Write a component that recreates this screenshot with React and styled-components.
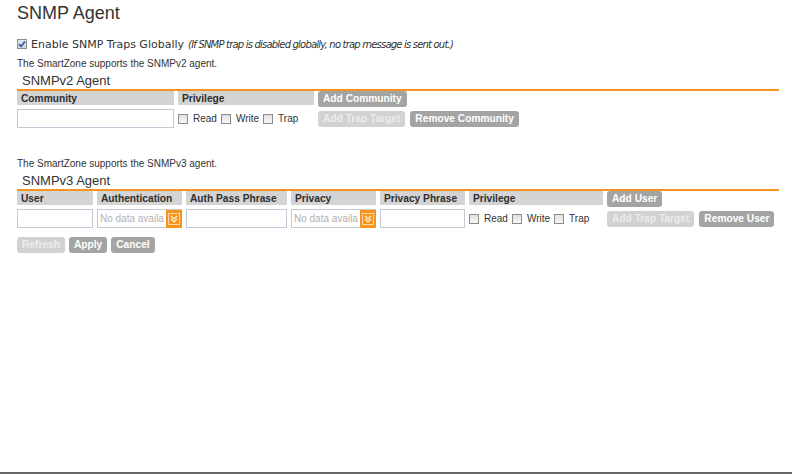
import React from "react";
import styled, { createGlobalStyle } from "styled-components";

const GlobalStyle = createGlobalStyle`
  html, body {
    margin: 0;
    padding: 0;
    background: #fff;
  }
  body {
    font-family: "Liberation Sans", Arial, sans-serif;
    color: #333;
  }
`;

const Page = styled.div`
  box-sizing: border-box;
  height: 474px;
  padding: 2px 13px 0 17px;
  border-bottom: 2px solid #666;
`;

const Title = styled.h1`
  margin: 0;
  font-size: 18px;
  line-height: 22px;
  font-weight: normal;
  color: #333;
`;

const TrapRow = styled.div`
  display: flex;
  align-items: center;
  gap: 4px;
  margin-top: 14px;
  height: 12px;
  font-family: "DejaVu Sans", sans-serif;
  font-size: 11px;
  color: #333;
  white-space: nowrap;
`;

const Note = styled.i`
  margin-left: 4px;
  font-size: 10px;
  letter-spacing: -0.8px;
`;

const Info = styled.div`
  margin-top: ${(p) => p.$top || 8}px;
  font-size: 10px;
  line-height: 12px;
  color: #333;
`;

const SectionTitle = styled.div`
  margin-top: 3px;
  padding-left: 5px;
  font-size: 13px;
  line-height: 16px;
  color: #333;
  border-bottom: 2px solid #f7941d;
`;

const Grid = styled.div`
  display: grid;
  grid-template-columns: ${(p) => p.$cols} auto;
  grid-template-rows: 16px 19px;
  column-gap: 4px;
  row-gap: 2px;
  align-items: center;
`;

const Head = styled.div`
  align-self: start;
  height: 14px;
  padding: 0 4px;
  background: #d4d4d4;
  font-weight: bold;
  font-size: 10.2px;
  line-height: 15px;
  color: #2e2e2e;
  white-space: nowrap;
  overflow: hidden;
`;

const Actions = styled.div`
  display: flex;
  gap: 5px;
  align-self: ${(p) => (p.$top ? "start" : "center")};
`;

const Button = styled.button`
  height: 16px;
  padding: 0 5px;
  border: 0;
  border-radius: 3px;
  background: ${(p) => (p.disabled ? "#d2d2d2" : "#a4a4a4")};
  color: ${(p) => (p.disabled ? "#ececec" : "#fff")};
  font-family: "Liberation Sans", Arial, sans-serif;
  font-weight: bold;
  font-size: 10.2px;
  line-height: 16px;
  white-space: nowrap;
`;

const TextInput = styled.div`
  box-sizing: border-box;
  height: 19px;
  border: 1px solid #c6c6d6;
  background: #fff;
`;

const SelectBox = styled.div`
  box-sizing: border-box;
  display: flex;
  height: 19px;
  border: 1px solid #c6c6d6;
  border-right: 0;
  background: #fff;
`;

const SelectText = styled.span`
  flex: 1;
  overflow: hidden;
  white-space: nowrap;
  padding-left: 2px;
  font-size: 10px;
  line-height: 17px;
  color: #b0b0b0;
`;

const Checks = styled.div`
  display: flex;
  align-items: center;
  font-size: 10px;
  color: #333;
`;

const Box = styled.span`
  box-sizing: border-box;
  display: inline-flex;
  align-items: center;
  justify-content: center;
  width: 10px;
  height: 10px;
  margin-right: ${(p) => p.$gap ?? 5}px;
  border: 1px solid #8c8c8c;
  background: ${(p) =>
    p.$checked
      ? "linear-gradient(#dfe6ef, #c9d4e2)"
      : "linear-gradient(#e2e2e2, #f6f6f6)"};
`;

const CheckLabel = styled.span`
  margin-right: 4px;
`;

const Footer = styled.div`
  display: flex;
  gap: 4px;
  margin-top: 9px;
`;

const Checkbox = ({ checked, gap }) => (
  <Box $checked={checked} $gap={gap}>
    {checked && (
      <svg width="8" height="8" viewBox="0 0 8 8">
        <path d="M1 4.2 L3.1 6.3 L7 1.6" stroke="#2b4f9c" strokeWidth="1.6" fill="none" />
      </svg>
    )}
  </Box>
);

const Privileges = () => (
  <Checks>
    <Checkbox />
    <CheckLabel>Read</CheckLabel>
    <Checkbox />
    <CheckLabel>Write</CheckLabel>
    <Checkbox />
    <CheckLabel>Trap</CheckLabel>
  </Checks>
);

const Select = () => (
  <SelectBox>
    <SelectText>No data availa</SelectText>
    <svg width="16" height="18" viewBox="0 0 16 18">
      <rect x="0" y="-1" width="16" height="19" fill="#f7941d" />
      <rect x="2.5" y="3.5" width="11" height="11" fill="none" stroke="#fcd6a4" />
      <path d="M5 6 L8 9 L11 6 M5 9 L8 12 L11 9" stroke="#fff4e4" strokeWidth="1.2" fill="none" />
    </svg>
  </SelectBox>
);

export default function App() {
  return (
    <>
      <GlobalStyle />
      <Page>
        <Title>SNMP Agent</Title>
        <TrapRow>
          <Checkbox checked gap={0} />
          <span>
            Enable SNMP Traps Globally
            <Note>(If SNMP trap is disabled globally, no trap message is sent out.)</Note>
          </span>
        </TrapRow>

        <Info>The SmartZone supports the SNMPv2 agent.</Info>
        <SectionTitle>SNMPv2 Agent</SectionTitle>
        <Grid $cols="157px 136px">
          <Head>Community</Head>
          <Head>Privilege</Head>
          <Actions $top>
            <Button>Add Community</Button>
          </Actions>
          <TextInput />
          <Privileges />
          <Actions>
            <Button disabled>Add Trap Target</Button>
            <Button>Remove Community</Button>
          </Actions>
        </Grid>

        <Info $top={30}>The SmartZone supports the SNMPv3 agent.</Info>
        <SectionTitle>SNMPv3 Agent</SectionTitle>
        <Grid $cols="76px 85px 101px 85px 85px 134px">
          <Head>User</Head>
          <Head>Authentication</Head>
          <Head>Auth Pass Phrase</Head>
          <Head>Privacy</Head>
          <Head>Privacy Phrase</Head>
          <Head>Privilege</Head>
          <Actions $top>
            <Button>Add User</Button>
          </Actions>
          <TextInput />
          <Select />
          <TextInput />
          <Select />
          <TextInput />
          <Privileges />
          <Actions>
            <Button disabled>Add Trap Target</Button>
            <Button>Remove User</Button>
          </Actions>
        </Grid>

        <Footer>
          <Button disabled>Refresh</Button>
          <Button>Apply</Button>
          <Button>Cancel</Button>
        </Footer>
      </Page>
    </>
  );
}
